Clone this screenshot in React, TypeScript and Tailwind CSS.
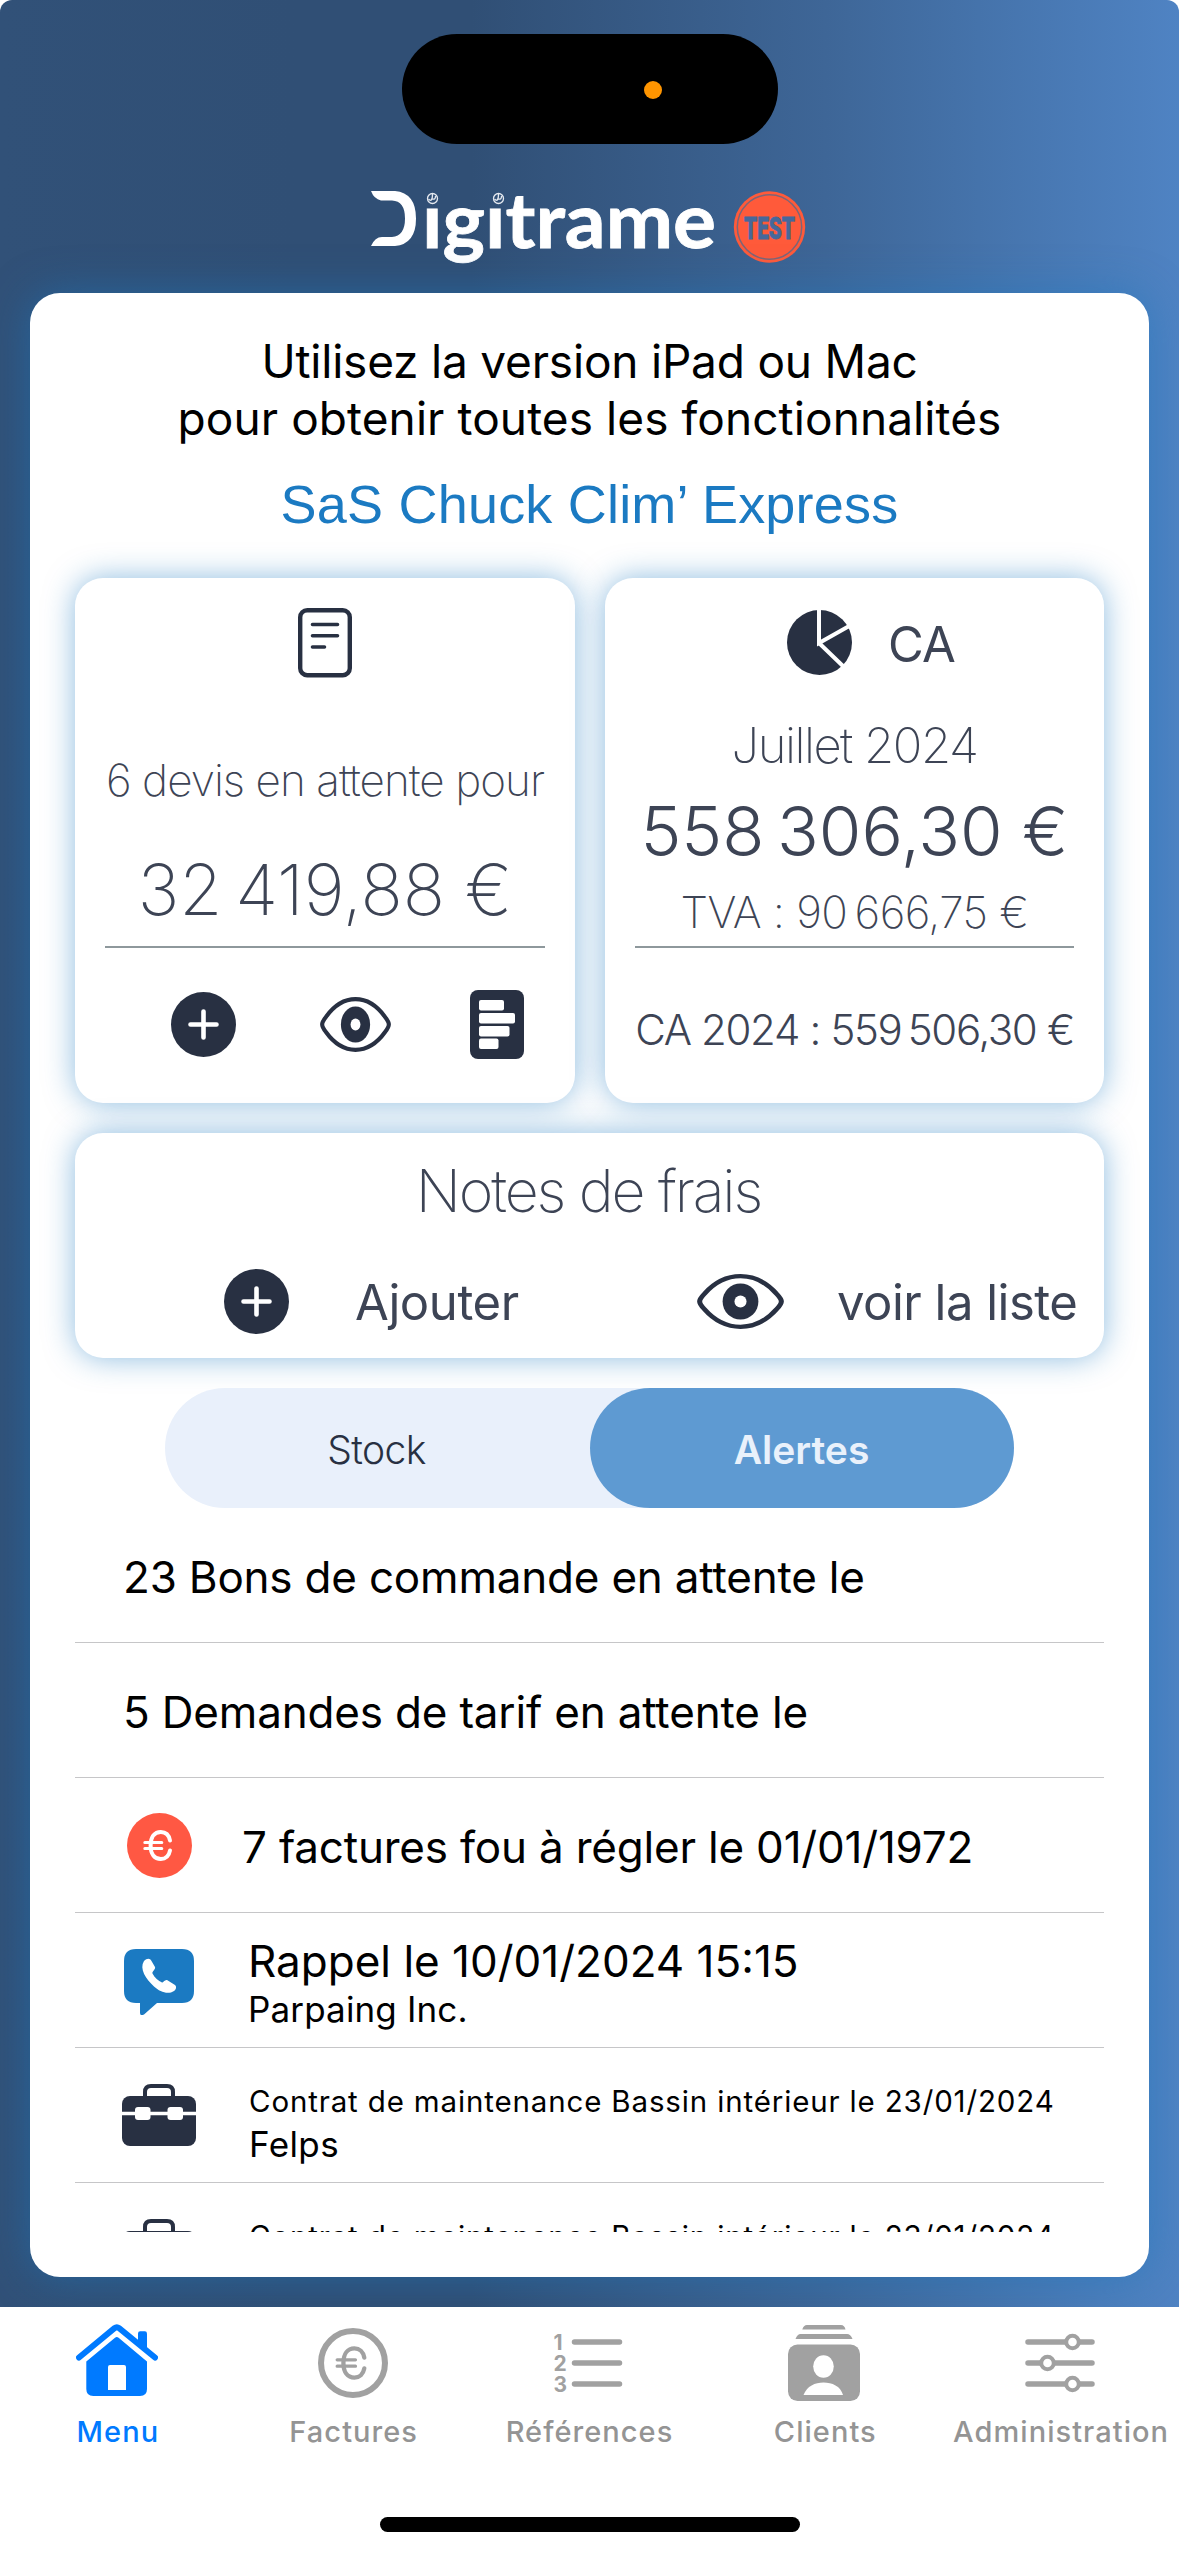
import React from 'react';

const NAVY = '#283042';

const PlusCircle = () => (
  <svg className="w-[65px] h-[65px]" viewBox="0 0 65 65">
    <circle cx="32.5" cy="32.5" r="32.5" fill={NAVY} />
    <path d="M32.5 19.5v26M19.5 32.5h26" stroke="#fff" strokeWidth="4.6" strokeLinecap="round" />
  </svg>
);

const Eye = ({ className }: { className: string }) => (
  <svg className={className} viewBox="0 0 72 55" preserveAspectRatio="none">
    <path
      d="M2.2 27.5c0-2.5 1.8-5 3.8-7.5C14 9 24 2.2 36 2.2S58 9 66 20c2 2.5 3.8 5 3.8 7.5S68 32.5 66 35C58 46 48 52.8 36 52.8S14 46 6 35c-2-2.5-3.8-5-3.8-7.5Z"
      fill="none"
      stroke={NAVY}
      strokeWidth="4.2"
    />
    <ellipse cx="36" cy="27.5" rx="14.8" ry="18" fill={NAVY} />
    <ellipse cx="36" cy="27.5" rx="5" ry="6" fill="#fff" />
  </svg>
);

const DocOutline = () => (
  <svg className="w-[54px] h-[70px]" viewBox="0 0 54 70" fill="none" stroke={NAVY} strokeLinecap="round">
    <rect x="2.2" y="2.2" width="49.6" height="65" rx="7" strokeWidth="4.4" />
    <path d="M14.5 16.5h25M14.5 27.7h25M14.5 39h12" strokeWidth="3.6" />
  </svg>
);

const DocFilled = () => (
  <svg className="w-[54px] h-[69px]" viewBox="0 0 54 69">
    <rect width="54" height="69" rx="8" fill={NAVY} />
    <g fill="#fff">
      <rect x="9" y="10" width="25" height="10.5" rx="2" />
      <rect x="9" y="23" width="36" height="10.5" rx="2" />
      <rect x="9" y="36" width="30.5" height="10.5" rx="2" />
      <rect x="9" y="48.5" width="19.5" height="10.5" rx="2" />
    </g>
  </svg>
);

const Pie = () => (
  <svg className="w-[65px] h-[65px]" viewBox="0 0 65 65">
    <circle cx="32.5" cy="32.5" r="32.5" fill={NAVY} />
    <path d="M32 -2V33L64 15M32 33L58 58" fill="none" stroke="#fff" strokeWidth="4" />
  </svg>
);

const Euro = ({ filled }: { filled?: boolean }) => (
  <svg className={filled ? 'w-[65px] h-[65px]' : 'w-[70px] h-[70px]'} viewBox="0 0 65 65" fill="none">
    {filled ? (
      <circle cx="32.5" cy="32.5" r="32.5" fill="#ff5843" />
    ) : (
      <circle cx="32.5" cy="32.5" r="29.7" stroke="#a1a1a1" strokeWidth="5.6" />
    )}
    <g stroke={filled ? '#fff' : '#a1a1a1'} strokeLinecap="round">
      <path d="M43 27.5C42 22.2 38.5 19 33.8 19c-6.3 0-10.2 5-10.2 13.5S27.5 46 33.8 46c4.7 0 8.2-3.2 9.2-8.5" strokeWidth="4" />
      <path d="M17.8 29.5h17M17.8 35.5h17" strokeWidth="3" />
    </g>
  </svg>
);

const PhoneBubble = () => (
  <svg className="w-[70px] h-[66px]" viewBox="0 0 70 66">
    <path d="M12 0h46q12 0 12 12v30q0 12-12 12H33L20 65.5q-4 2-4-2V54h-4Q0 54 0 42V12Q0 0 12 0Z" fill="#1b7ac2" />
    <path
      d="M20 12c3-3 6-3 7.5 0l3.5 6c1 2-3.5 5-2.5 6.5 2 4 6 7.5 9.5 9 1 .5 2.500-3 5-2.500l8 5c2 2 1 4.500-1 6-6 4-14 1-20-4.500C22 30 15 20 20 12Z"
      fill="#fff"
    />
  </svg>
);

const Toolbox = () => (
  <svg className="w-[74px] h-[62px]" viewBox="0 0 74 62">
    <path d="M23 14V8q0-6 6-6h16q6 0 6 6v6" fill="none" stroke={NAVY} strokeWidth="4" />
    <rect y="12" width="74" height="50" rx="8" fill={NAVY} />
    <path d="M0 29.5h74" stroke="#fff" strokeWidth="3.5" />
    <rect x="13" y="23" width="15.5" height="13" rx="3" fill="#fff" />
    <rect x="45.5" y="23" width="15.5" height="13" rx="3" fill="#fff" />
  </svg>
);

const Home = () => (
  <svg className="mb-[6px] w-[82px] h-[72px]" viewBox="0 0 82 72" fill="#007aff">
    <path d="M3 33.5L38.5 4.2q2.3-1.8 4.6 0L79 33.5" fill="none" stroke="#007aff" strokeWidth="6" strokeLinecap="round" />
    <path d="M62 20V9.5q0-2.2 2.2-2.2h4.6q2.2 0 2.2 2.2V28Z" />
    <path
      fillRule="evenodd"
      d="M39 13.7q1.8-1.5 3.6 0L71 37.5V65q0 7-7 7H17.3q-7 0-7-7V37.5ZM34 41q-2 0-2 2v23h18V43q0-2-2-2Z"
    />
  </svg>
);

const NumberedList = () => (
  <div className="flex items-center w-[70px] h-[64px] text-[#a1a1a1]">
    <div className="w-[16px] text-[21px] leading-[21px] font-bold tracking-normal">
      <div>1</div>
      <div>2</div>
      <div>3</div>
    </div>
    <svg className="ml-[2px] w-[52px] h-[60px]" viewBox="0 0 52 60">
      <path d="M3.5 9h45M3.5 30h45M3.5 51h45" stroke="#a1a1a1" strokeWidth="5.5" strokeLinecap="round" />
    </svg>
  </div>
);

const Contacts = () => (
  <svg className="w-[72px] h-[76px]" viewBox="0 0 72 76" fill="#a1a1a1">
    <path d="M14.3 4.5Q15.500 0 19 0h34q3.500 0 4.500 4.500ZM7.500 14Q9.500 9 12.500 9h46.500q3.500 0 5.500 5Z" />
    <rect y="19.5" width="72" height="56.5" rx="9.5" />
    <ellipse cx="35.5" cy="41.5" rx="10.3" ry="11.2" fill="#fff" />
    <path d="M15.5 70C19 61 27 57.5 35.5 57.5s17 3.500 19.500 12.500Z" fill="#fff" />
  </svg>
);

const Sliders = () => (
  <svg className="w-[70px] h-[60px]" viewBox="0 0 70 60" stroke="#a1a1a1" fill="#fff">
    <path d="M3 9h64M3 30h64M3 51h64" strokeWidth="5.5" strokeLinecap="round" />
    <circle cx="47.5" cy="9" r="6.3" strokeWidth="4" />
    <circle cx="22.5" cy="30" r="6.3" strokeWidth="4" />
    <circle cx="47.5" cy="51" r="6.3" strokeWidth="4" />
  </svg>
);

const Logo = () => (
  <svg className="w-[435px] h-[90px] overflow-visible" viewBox="0 0 435 90">
    <path d="M0 0h24q21 2 21 27.5T24 55H0q4-9 11-9h10q13-1 13-18.5T21 9.5H10Q3 8 0 0Z" fill="#fff" />
    <text x="51" y="56.5" fill="#fff" fontFamily="Lato, sans-serif" fontWeight="700" fontSize="76" stroke="#fff" strokeWidth="0.8" textLength="294" lengthAdjust="spacingAndGlyphs">
      ıgıtrame
    </text>
    <g fill="none" stroke="#e4e9f0" strokeWidth="1.3">
      <circle cx="61.5" cy="7.5" r="5" />
      <path d="M57.5 8q4 4 4-5M61.5 8q3 1 3-3" />
      <circle cx="127.5" cy="7.5" r="5" />
      <path d="M123.5 8q4 4 4-5M127.5 8q3 1 3-3" />
    </g>
    <circle cx="398.5" cy="36" r="35.7" fill="#ff5a3a" />
    <circle cx="398.5" cy="36" r="32.2" fill="none" stroke="#7d6577" strokeWidth="1.5" />
    <text x="373" y="47.5" fill="#46689b" stroke="#46689b" strokeWidth="0.8" fontFamily="Roboto, sans-serif" fontWeight="900" fontSize="31" textLength="51" lengthAdjust="spacingAndGlyphs">
      TEST
    </text>
  </svg>
);

const card = 'bg-white rounded-[28px] shadow-[0_0_30px_rgba(27,122,194,0.5)]';

const contracts = [
  { id: 1, title: 'Contrat de maintenance Bassin intérieur le 23/01/2024', client: 'Felps' },
  { id: 2, title: 'Contrat de maintenance Bassin intérieur le 23/01/2024', client: 'Felps' },
];

const tabs = [
  { label: 'Menu', icon: <Home />, active: true },
  { label: 'Factures', icon: <Euro /> },
  { label: 'Références', icon: <NumberedList /> },
  { label: 'Clients', icon: <Contacts /> },
  { label: 'Administration', icon: <Sliders /> },
];

export default function App() {
  return (
    <div className="w-[1179px] h-[2556px] bg-white overflow-hidden flex flex-col font-['Inter',sans-serif] whitespace-nowrap">
      <div className="h-[2307px] rounded-t-[12px] bg-[linear-gradient(90deg,#315178_0%,#304f75_25%,#304f75_40%,#3e6697_70%,#4573ab_83%,#4f83c3_100%)] flex flex-col items-center overflow-hidden">
        <div className="mt-[34px] w-[376px] h-[110px] shrink-0 rounded-full bg-black flex items-center">
          <span className="ml-[242px] mt-[1px] w-[18px] h-[18px] rounded-full bg-[#ff9500]" />
        </div>
        <div className="mt-[47px] h-[90px] shrink-0 self-start ml-[371px]">
          <Logo />
        </div>

        <main className="mt-[12px] w-[1119px] h-[1984px] shrink-0 rounded-[30px] bg-white shadow-[0_0_40px_rgba(27,122,194,0.5)] px-[45px] flex flex-col">
          <p className="mt-[40px] text-center text-[46px] leading-[57px] text-black">
            <span className="tracking-[-0.2px]">Utilisez la version iPad ou Mac</span>
            <br />
            <span className="tracking-[0.08px]">pour obtenir toutes les fonctionnalités</span>
          </p>
          <h1 className="mt-[27px] h-[60px] text-center font-['Liberation_Sans',sans-serif] text-[54px] leading-[60px] tracking-[0.2px] text-[#1b7ac2]">
            SaS Chuck Clim’ Express
          </h1>

          <div className="mt-[44px] flex gap-[30px] text-[#3d4455]">
            <section className={`${card} w-[500px] h-[525px] px-[30px] flex flex-col items-center`}>
              <div className="mt-[30px] h-[70px]">
                <DocOutline />
              </div>
              <div className="mt-[75px] h-[54px] leading-[54px] text-[44px] font-[160] tracking-[-0.95px]">6 devis en attente pour</div>
              <div className="mt-[41px] h-[84px] leading-[84px] text-[70px] font-[160] tracking-[0.01em]">32{'\u202f'}419,88 €</div>
              <div className="mt-[14px] w-[440px] h-[2px] bg-[#8e989c]" />
              <div className="mt-[41px] w-full h-[70px] flex items-center pl-[66px]">
                <PlusCircle />
                <Eye className="ml-[84px] w-[71px] h-[55px]" />
                <span className="ml-[79px]">
                  <DocFilled />
                </span>
              </div>
            </section>

            <section className={`${card} w-[499px] h-[525px] px-[30px] flex flex-col items-center`}>
              <div className="mt-[32px] h-[65px] flex items-center self-start ml-[152px]">
                <Pie />
                <span className="ml-[36px] pt-[4px] text-[49px] tracking-[-0.8px]">CA</span>
              </div>
              <div className="mt-[41px] h-[60px] leading-[60px] text-[49px] font-[160] tracking-[-1.5px]">Juillet 2024</div>
              <div className="mt-[13px] h-[84px] leading-[84px] text-[69px] font-light tracking-[-0.035em]">558{'\u202f'}306,30 €</div>
              <div className="mt-[12px] h-[54px] leading-[54px] text-[44px] font-[160] tracking-[-0.6px]">TVA : 90{'\u202f'}666,75 €</div>
              <div className="mt-[7px] w-[439px] h-[2px] bg-[#8e989c]" />
              <div className="mt-[55px] h-[54px] leading-[54px] text-[42px] font-light tracking-[-1.35px]">
                CA 2024 : 559{'\u202f'}506,30 €
              </div>
            </section>
          </div>

          <section className={`${card} mt-[30px] w-[1029px] h-[225px] text-[#3d4455]`}>
            <div className="pt-[22px] pr-[2px] h-[94px] leading-[72px] text-center text-[59px] font-[160] tracking-[-2.1px]">Notes de frais</div>
            <div className="mt-[42px] h-[65px] flex items-center pl-[149px] text-[49px]">
              <PlusCircle />
              <span className="ml-[66px] w-[162px] pt-[3px] tracking-[-0.4px]">Ajouter</span>
              <Eye className="ml-[180px] w-[87px] h-[55px]" />
              <span className="ml-[53px] pt-[3px] tracking-[-0.5px]">voir la liste</span>
            </div>
          </section>

          <div className="mt-[30px] ml-[90px] w-[849px] h-[120px] rounded-full bg-[#e9f0fb] flex text-[39px] leading-[123px] text-center">
            <div className="flex-1 pr-[2px] font-light text-[#283042] tracking-[-0.6px]">Stock</div>
            <div className="flex-1 pr-[1px] rounded-full bg-[#5e9ad2] text-[#e9f1fb] font-semibold">Alertes</div>
          </div>

          <div className="h-[724px] overflow-hidden text-black">
            <div className="h-[135px] border-b border-[#c6c6c8] flex items-center pl-[48px] pt-[3px] text-[44px] tracking-[-0.2px]">
              23 Bons de commande en attente le
            </div>
            <div className="h-[135px] border-b border-[#c6c6c8] flex items-center pl-[48px] pt-[3px] text-[44px] tracking-[-0.18px]">
              5 Demandes de tarif en attente le
            </div>
            <div className="h-[135px] border-b border-[#c6c6c8] flex items-center pl-[52px] text-[44px] tracking-[-0.2px]">
              <Euro filled />
              <span className="ml-[50px] pt-[3px]">7 factures fou à régler le 01/01/1972</span>
            </div>
            <div className="h-[135px] border-b border-[#c6c6c8] flex items-center pl-[49px] pt-[4px]">
              <PhoneBubble />
              <div className="ml-[54px] pt-[2px]">
                <div className="text-[44px] leading-[52px]">Rappel le 10/01/2024 15:15</div>
                <div className="text-[35px] leading-[44px] tracking-[0.15px]">Parpaing Inc.</div>
              </div>
            </div>
            {contracts.map(({ id, title, client }) => (
              <div key={id} className="h-[135px] border-b border-[#c6c6c8] flex items-center pl-[47px]">
                <Toolbox />
                <div className="ml-[53px] pt-[17px]">
                  <div className="text-[29.5px] leading-[40px] tracking-[0.85px]">{title}</div>
                  <div className="text-[35px] leading-[46px] tracking-[0.4px]">{client}</div>
                </div>
              </div>
            ))}
          </div>
        </main>
      </div>

      <nav className="h-[249px] bg-white flex flex-col items-center">
        <div className="w-full grid grid-cols-5">
          {tabs.map(({ label, icon, active }) => (
            <div
              key={label}
              className={`flex flex-col items-center text-[29px] font-[470] tracking-[1.05px] ${active ? 'text-[#007aff]' : 'text-[#949494]'}`}
            >
              <div className="mt-[13px] mr-[2px] h-[86px] flex items-center">{icon}</div>
              <span className="mt-[6px] leading-[40px]">{label}</span>
            </div>
          ))}
        </div>
        <div className="mt-[65px] w-[420px] h-[15px] rounded-full bg-black" />
      </nav>
    </div>
  );
}
